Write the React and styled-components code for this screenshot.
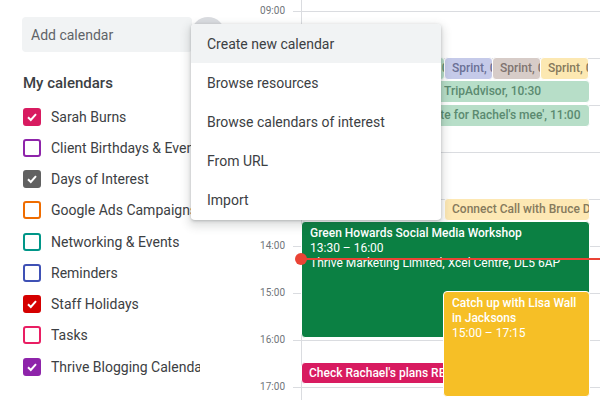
import React from 'react'
import styled, { createGlobalStyle } from 'styled-components'

const GlobalStyle = createGlobalStyle`
  html, body {
    margin: 0;
    padding: 0;
    width: 600px;
    height: 400px;
    overflow: hidden;
    background: #fff;
    font-family: Roboto, "Liberation Sans", Arial, sans-serif;
  }
`

const Page = styled.div`
  position: relative;
  display: flex;
  width: 600px;
  height: 400px;
  overflow: hidden;
`

const Sidebar = styled.aside`
  width: 245px;
  flex-shrink: 0;
  padding: 17px 0 0 22px;
  box-sizing: border-box;
`

const SearchRow = styled.div`
  display: flex;
  align-items: center;
  height: 35px;
`

const SearchBox = styled.div`
  width: 170px;
  height: 35px;
  background: #f1f3f4;
  border-radius: 4px;
  display: flex;
  align-items: center;
  padding-left: 9px;
  box-sizing: border-box;
  font-size: 14px;
  color: #5f6368;
`

const AddButton = styled.div`
  width: 34px;
  height: 34px;
  border-radius: 50%;
  background: #dadce0;
  margin-left: -1px;
  margin-top: -2px;
`

const Heading = styled.div`
  margin: 21px 0 8px 1px;
  font-size: 15px;
  line-height: 20px;
  font-weight: 500;
  color: #3c4043;
`

const CalendarList = styled.div`
  display: flex;
  flex-direction: column;
`

const CalendarRow = styled.div`
  display: flex;
  align-items: center;
  height: 31.25px;
`

const Box = styled.div`
  width: 18px;
  height: 18px;
  box-sizing: border-box;
  margin-left: 1px;
  border-radius: 3px;
  border: 2px solid ${p => p.$color};
  background: ${p => (p.$checked ? p.$color : 'transparent')};
  display: flex;
  align-items: center;
  justify-content: center;
`

const Label = styled.div`
  margin-left: 10px;
  width: 149px;
  overflow: hidden;
  white-space: nowrap;
  font-size: 14px;
  color: #3c4043;
`

const Main = styled.div`
  position: relative;
  flex: 1;
  display: flex;
  flex-direction: column;
`

const HourRow = styled.div`
  display: grid;
  grid-template-columns: 48px 8px 1fr;
  height: ${p => p.$height}px;
  flex-shrink: 0;
`

const TimeLabel = styled.div`
  margin-top: -6px;
  padding-right: 8px;
  text-align: right;
  font-size: 10px;
  line-height: 12px;
  color: #70757a;
`

const Tick = styled.div`
  border-top: ${p => (p.$line ? '1px solid #dadce0' : 'none')};
`

const DayCell = styled.div`
  border-left: 1px solid #dadce0;
  border-top: ${p => (p.$line ? '1px solid #dadce0' : 'none')};
`

const DayLayer = styled.div`
  position: absolute;
  left: 56px;
  top: 0;
  right: 0;
  bottom: 0;
`

const Event = styled.div`
  position: absolute;
  box-sizing: border-box;
  border-radius: 4px;
  border: 1px solid #fff;
  background: ${p => p.$bg};
  color: ${p => p.$fg || '#fff'};
  font-size: 12px;
  line-height: 15px;
  padding: ${p => (p.$tall ? '4px 8px' : '3px 0 0 7px')};
  overflow: hidden;
`

const EventTitle = styled.div`
  font-weight: 500;
  white-space: ${p => (p.$wrap ? 'normal' : 'nowrap')};
  overflow: hidden;
`

const EventLine = styled.div`
  white-space: nowrap;
  overflow: hidden;
`

const NowLine = styled.div`
  position: absolute;
  left: 0;
  right: 0;
  top: 258px;
  height: 2px;
  background: #ea4335;
  &::before {
    content: '';
    position: absolute;
    left: -6px;
    top: -5px;
    width: 12px;
    height: 12px;
    border-radius: 50%;
    background: #ea4335;
  }
`

const Menu = styled.div`
  position: absolute;
  left: 191px;
  top: 24px;
  width: 250px;
  padding-bottom: 1px;
  background: #fff;
  border-radius: 4px;
  box-shadow: 0 4px 8px 3px rgba(60, 64, 67, 0.15), 0 1px 3px rgba(60, 64, 67, 0.3);
  overflow: hidden;
  z-index: 5;
`

const MenuItem = styled.div`
  height: 39px;
  display: flex;
  align-items: center;
  padding: 1px 0 0 16px;
  box-sizing: border-box;
  font-size: 14px;
  color: #3c4043;
  background: ${p => (p.$active ? '#f1f3f4' : '#fff')};
`

const Check = () => (
  <svg width="12" height="12" viewBox="0 0 12 12">
    <polyline points="2,6.2 4.8,9 10,3.2" fill="none" stroke="#fff" strokeWidth="2" />
  </svg>
)

const calendars = [
  { name: 'Sarah Burns', color: '#d81b60', checked: true },
  { name: 'Client Birthdays & Events', color: '#8e24aa' },
  { name: 'Days of Interest', color: '#616161', checked: true },
  { name: 'Google Ads Campaigns', color: '#ef6c00' },
  { name: 'Networking & Events', color: '#009688' },
  { name: 'Reminders', color: '#3f51b5' },
  { name: 'Staff Holidays', color: '#d50000', checked: true },
  { name: 'Tasks', color: '#e91e63' },
  { name: 'Thrive Blogging Calendar', color: '#8e24aa', checked: true },
]

const hours = ['09:00', '10:00', '11:00', '12:00', '13:00', '14:00', '15:00', '16:00', '17:00']

const sprints = [
  { bg: '#b7dec8', fg: '#5b8a70' },
  { bg: '#b7dec8', fg: '#5b8a70' },
  { bg: '#b7dec8', fg: '#5b8a70' },
  { bg: '#c5cae9', fg: '#6b7196' },
  { bg: '#d7ccc8', fg: '#7f7470' },
  { bg: '#fce8b2', fg: '#867a5c' },
]

const menuItems = ['Create new calendar', 'Browse resources', 'Browse calendars of interest', 'From URL', 'Import']

export default function App() {
  return (
    <Page>
      <GlobalStyle />
      <Sidebar>
        <SearchRow>
          <SearchBox>Add calendar</SearchBox>
          <AddButton />
        </SearchRow>
        <Heading>My calendars</Heading>
        <CalendarList>
          {calendars.map(c => (
            <CalendarRow key={c.name}>
              <Box $color={c.color} $checked={c.checked}>{c.checked && <Check />}</Box>
              <Label>{c.name}</Label>
            </CalendarRow>
          ))}
        </CalendarList>
      </Sidebar>

      <Main>
        <HourRow $height={11}>
          <div />
          <Tick />
          <DayCell />
        </HourRow>
        {hours.map(h => (
          <HourRow key={h} $height={47}>
            <TimeLabel>{h}</TimeLabel>
            <Tick $line />
            <DayCell $line />
          </HourRow>
        ))}

        <DayLayer>
          {sprints.map((s, i) => (
            <Event key={i} $bg={s.bg} $fg={s.fg} style={{ left: 143 - 48 * (3 - i), top: 57, width: 49, height: 23 }}>
              <EventTitle>Sprint, 09:30</EventTitle>
            </Event>
          ))}
          <Event $bg="#b7dec8" $fg="#5b8a70" style={{ left: 135, top: 80, width: 154, height: 23 }}>
            <EventTitle>TripAdvisor, 10:30</EventTitle>
          </Event>
          <Event $bg="#b7dec8" $fg="#5b8a70" style={{ left: 116, top: 104, width: 173, height: 23 }}>
            <EventTitle>Note for Rachel's mee', 11:00</EventTitle>
          </Event>
          <Event $bg="#fde8b4" $fg="#867a5c" style={{ left: 143, top: 198, width: 146, height: 23 }}>
            <EventTitle>Connect Call with Bruce Davies, 13:00</EventTitle>
          </Event>
          <Event $bg="#0b8043" $tall style={{ left: 0, top: 221, width: 289, height: 117 }}>
            <EventTitle>Green Howards Social Media Workshop</EventTitle>
            <EventLine>13:30 – 16:00</EventLine>
            <EventLine>Thrive Marketing Limited, Xcel Centre, DL5 6AP</EventLine>
          </Event>
          <NowLine />
          <Event $bg="#d81b60" style={{ left: 0, top: 362, width: 150, height: 22 }}>
            <EventTitle>Check Rachael's plans RE: holiday</EventTitle>
          </Event>
          <Event $bg="#f6bf26" $tall style={{ left: 142, top: 291, width: 147, height: 106 }}>
            <EventTitle $wrap>Catch up with Lisa Wall in Jacksons</EventTitle>
            <EventLine>15:00 – 17:15</EventLine>
          </Event>
        </DayLayer>
      </Main>

      <Menu>
        {menuItems.map((m, i) => (
          <MenuItem key={m} $active={i === 0}>{m}</MenuItem>
        ))}
      </Menu>
    </Page>
  )
}
